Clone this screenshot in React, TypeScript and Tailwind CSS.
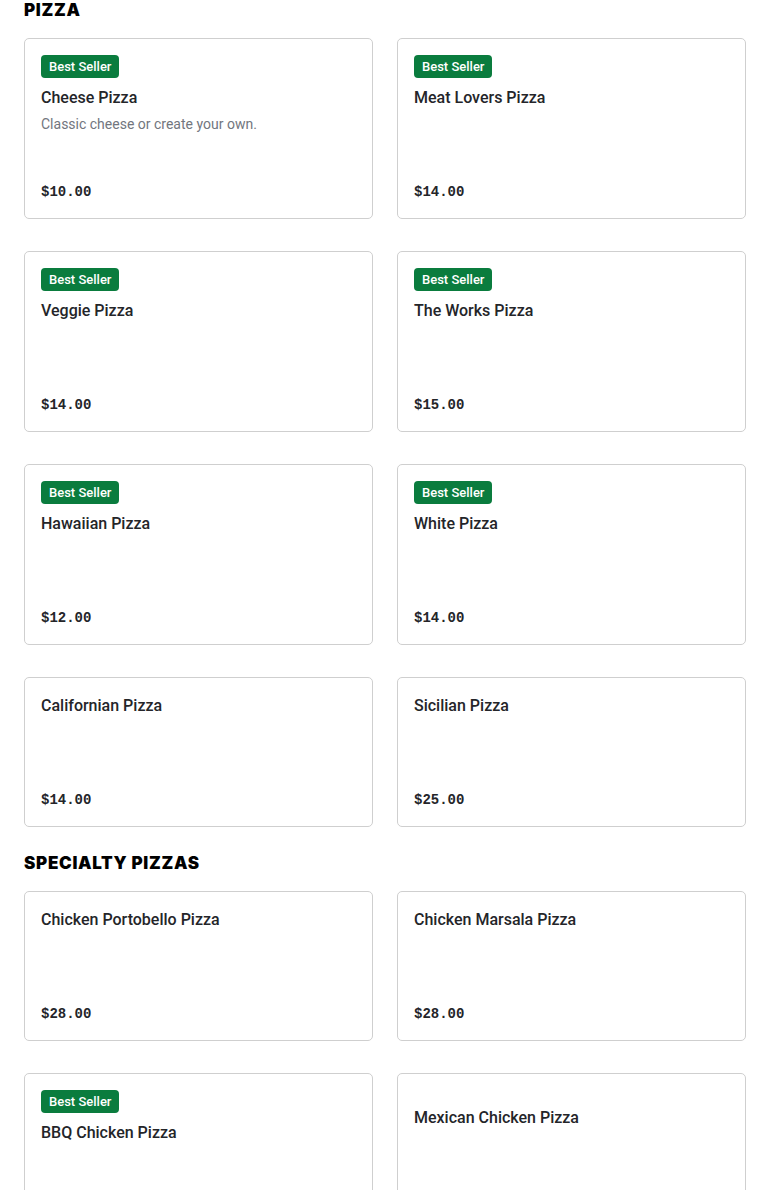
type Item = { name: string; price: string; desc?: string; best?: boolean };

const sections: { title: string; items: Item[] }[] = [
  {
    title: "PIZZA",
    items: [
      { name: "Cheese Pizza", price: "$10.00", desc: "Classic cheese or create your own.", best: true },
      { name: "Meat Lovers Pizza", price: "$14.00", best: true },
      { name: "Veggie Pizza", price: "$14.00", best: true },
      { name: "The Works Pizza", price: "$15.00", best: true },
      { name: "Hawaiian Pizza", price: "$12.00", best: true },
      { name: "White Pizza", price: "$14.00", best: true },
      { name: "Californian Pizza", price: "$14.00" },
      { name: "Sicilian Pizza", price: "$25.00" },
    ],
  },
  {
    title: "SPECIALTY PIZZAS",
    items: [
      { name: "Chicken Portobello Pizza", price: "$28.00" },
      { name: "Chicken Marsala Pizza", price: "$28.00" },
      { name: "BBQ Chicken Pizza", price: "$28.00", best: true },
      { name: "Mexican Chicken Pizza", price: "$28.00" },
    ],
  },
];

const ItemCard = ({ item }: { item: Item }) => (
  <div className="flex flex-col justify-center rounded-[5px] border border-[#cfcfcf] bg-white p-4">
    {item.best && (
      <span className="mb-2 flex h-[23px] w-fit items-center rounded-[4px] bg-[#0a7c3e] px-2 text-[13px] font-medium leading-none text-white">
        Best Seller
      </span>
    )}
    <div className="min-h-[96px]">
      <h3 className="text-[16px] font-medium leading-6 text-[#242529]">{item.name}</h3>
      {item.desc && <p className="mt-1 text-[14px] leading-5 text-[#72767e]">{item.desc}</p>}
    </div>
    <p className="font-['Liberation_Mono',monospace] text-[14px] font-bold leading-5 text-[#242529]">
      {item.price}
    </p>
  </div>
);

export default function App() {
  return (
    <div className="min-h-screen bg-white px-6 font-['Roboto',sans-serif]">
      {sections.map((s, i) => (
        <section key={s.title} className={i > 0 ? "mt-[26px]" : ""}>
          <h2 className="mb-[18px] font-['Inter',sans-serif] text-[17px] font-black leading-5 tracking-[0.7px] text-black">
            {s.title}
          </h2>
          <div className="grid grid-cols-2 gap-x-6 gap-y-8">
            {s.items.map((it) => (
              <ItemCard key={it.name} item={it} />
            ))}
          </div>
        </section>
      ))}
    </div>
  );
}
